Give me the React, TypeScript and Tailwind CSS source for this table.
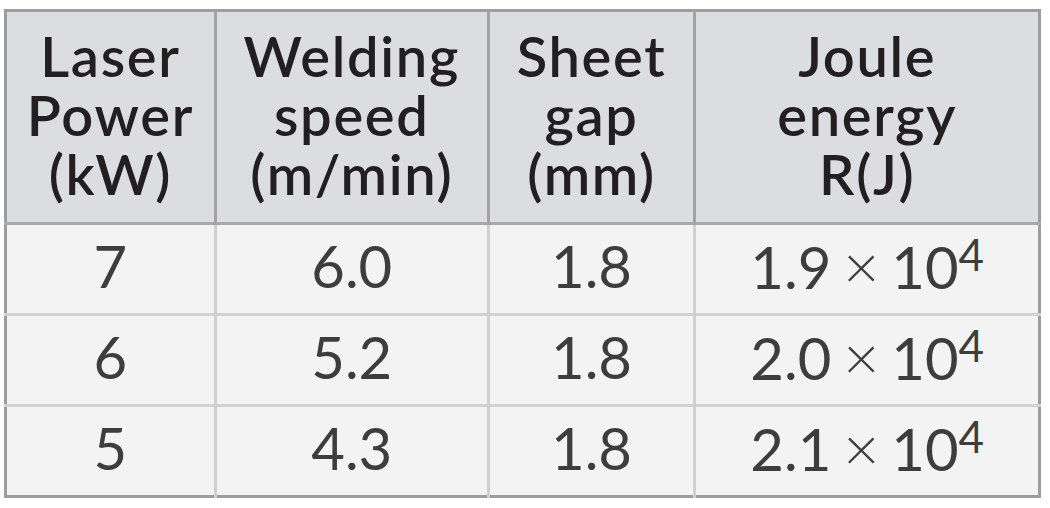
const headers = [
  { lines: ["Laser", "Power", "(kW)"], w: "w-[210px]" },
  { lines: ["Welding", "speed", "(m/min)"], w: "w-[273px]" },
  { lines: ["Sheet", "gap", "(mm)"], w: "w-[207px]" },
  { lines: ["Joule", "energy", "R(J)"], w: "w-[345px]" },
];

const rows = [
  { power: "7", speed: "6.0", gap: "1.8", energy: "1.9" },
  { power: "6", speed: "5.2", gap: "1.8", energy: "2.0" },
  { power: "5", speed: "4.3", gap: "1.8", energy: "2.1" },
];

export default function App() {
  return (
    <div className="w-[1050px] h-[508px] bg-white pt-[9px] pl-[4px]">
      <table
        className="border-collapse w-[1037px] h-[489px] border-[3px] border-[#9d9d9f] text-center"
        style={{ fontFamily: "Lato, 'Open Sans', sans-serif" }}
      >
        <thead>
          <tr className="h-[213px] bg-[#dcdde0] border-b-[3px] border-[#a9a9ab]">
            {headers.map((h, i) => (
              <th
                key={i}
                className={`${h.w} p-0 pb-[6px] font-semibold text-[56px] leading-[59px] tracking-[0.03em] text-[#231f20] ${
                  i > 0 ? "border-l-[3px] border-[#a2a2a4]" : ""
                }`}
              >
                {h.lines.map((l) => (
                  <div key={l}>{l}</div>
                ))}
              </th>
            ))}
          </tr>
        </thead>
        <tbody>
          {rows.map((r, i) => (
            <tr key={i} className={`h-[91px] bg-[#f3f3f3] ${i > 0 ? "border-t-[3px] border-[#d2d2d4]" : ""}`}>
              <td className="p-0 pb-[7px] text-[58px] leading-[60px] text-[#3d3d3d]">{r.power}</td>
              <td className="p-0 pb-[7px] text-[58px] leading-[60px] text-[#3d3d3d] border-l-[3px] border-[#cfcfd1]">{r.speed}</td>
              <td className="p-0 pb-[7px] text-[58px] leading-[60px] text-[#3d3d3d] border-l-[3px] border-[#cfcfd1]">{r.gap}</td>
              <td className="p-0 pb-[7px] text-[58px] leading-[60px] text-[#3d3d3d] border-l-[3px] border-[#cfcfd1]">
                {r.energy}
                <span className="text-[62px] font-light mx-[12px]">×</span>10
                <sup className="text-[44px] leading-none -top-[18px]">4</sup>
              </td>
            </tr>
          ))}
        </tbody>
      </table>
    </div>
  );
}
